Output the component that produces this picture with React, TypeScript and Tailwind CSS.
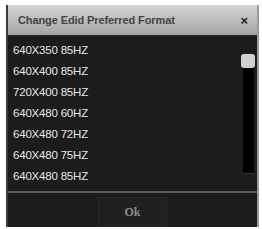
const modes = [
  "640X350 85HZ",
  "640X400 85HZ",
  "720X400 85HZ",
  "640X480 60HZ",
  "640X480 72HZ",
  "640X480 75HZ",
  "640X480 85HZ",
];

export default function App() {
  return (
    <div className="w-[262px] h-[229px] bg-white pt-[5px] pl-[6px] font-['Liberation_Sans',Arial,sans-serif]">
      <div className="w-[253px] h-[222px] flex flex-col bg-[#1c1c1c] border-l-2 border-[#3a3a3a] border-r-2 border-r-[#9a9a9a]">
        <div className="h-[31px] shrink-0 flex items-center justify-between pl-[10px] pr-[9px] bg-gradient-to-b from-[#d6d6d6] to-[#a4a4a4] border-b border-[#2a2a2a]">
          <span className="text-[11px] font-bold text-[#444] tracking-[-0.1px]">
            Change Edid Preferred Format
          </span>
          <span className="text-[13px] font-bold text-[#222] leading-none">×</span>
        </div>
        <div className="flex h-[155px] shrink-0">
          <ul className="flex-1 pl-[5px] pt-[4px]">
            {modes.map((m) => (
              <li
                key={m}
                className="h-[21px] flex items-center text-[11.5px] text-[#e6e6e6] tracking-[-0.2px]"
              >
                {m}
              </li>
            ))}
          </ul>
          <div className="w-[14px] mr-[2px] mt-[18px] flex flex-col">
            <div className="h-[14px] rounded-[3px] bg-[#d0d0d0]" />
            <div className="w-[11px] mx-auto h-[106px] bg-black border-b border-[#333]" />
          </div>
        </div>
        <div className="h-[2px] bg-[#5a5a5a]" />
        <div className="flex-1 flex justify-center pt-[4px]">
          <button className="w-[69px] bg-[#202020] border border-[#262626] text-[12px] font-bold text-[#8a8a8a] font-['Liberation_Serif',serif]">
            Ok
          </button>
        </div>
      </div>
    </div>
  );
}
